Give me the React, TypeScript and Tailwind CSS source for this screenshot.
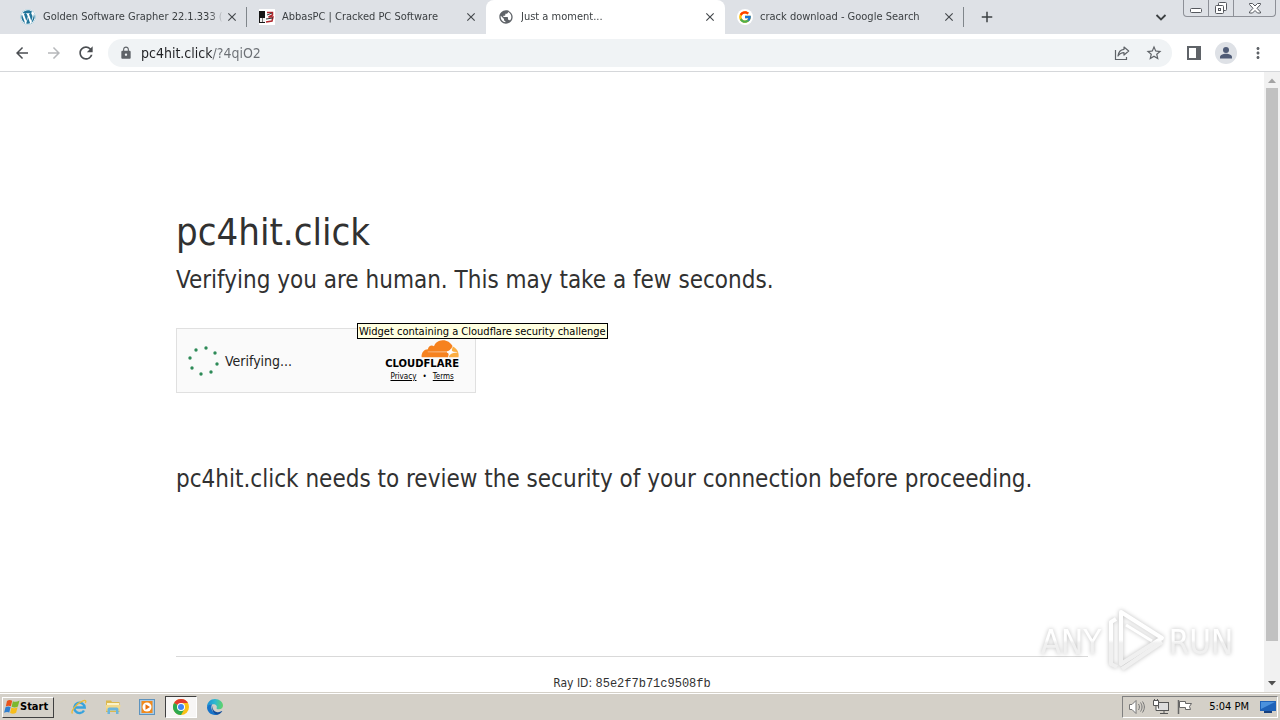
import type { ReactNode } from "react"
import { FaWordpress } from "react-icons/fa"
import { FcGoogle } from "react-icons/fc"
import { MdAdd, MdArrowBack, MdArrowForward, MdClose, MdLock, MdMoreVert, MdPublic, MdRefresh, MdStarBorder } from "react-icons/md"

interface Tab {
  id: string
  title: string
  icon: ReactNode
  active?: boolean
  divider?: boolean
}

const tabs: Tab[] = [
  {
    id: "grapher",
    title: "Golden Software Grapher 22.1.333 (",
    icon: <FaWordpress className="size-4 shrink-0 rounded-full bg-white text-[#21759b]" />,
    divider: true,
  },
  { id: "abbas", title: "AbbasPC | Cracked PC Software", icon: <AbbasIcon /> },
  {
    id: "moment",
    title: "Just a moment...",
    icon: <MdPublic className="size-4 shrink-0 text-[#5f6368]" />,
    active: true,
  },
  {
    id: "google",
    title: "crack download - Google Search",
    icon: (
      <span className="flex size-4 shrink-0 items-center justify-center rounded-full bg-white">
        <FcGoogle className="size-3.5" />
      </span>
    ),
    divider: true,
  },
]

function AbbasIcon() {
  return (
    <svg viewBox="0 0 16 16" className="size-4 shrink-0">
      <rect width="16" height="16" fill="#fff" />
      <rect y="2" width="6" height="12" fill="#161616" />
      <path d="M1 9h5v4H1z" fill="#eee" />
      <path d="M3.500 9v4" stroke="#777" />
      <path d="M8 3.500h5.500v2.500l-4 2h4.500l-1 4-6 1" fill="none" stroke="#b0272d" strokeWidth="1.500" />
      <path d="M8 6l5-2M7 10l7-1" stroke="#333" strokeWidth="1" />
    </svg>
  )
}

function ShareIcon() {
  return (
    <svg viewBox="0 0 16 16" className="size-4" fill="none" stroke="currentColor" strokeWidth="1.2">
      <path d="M1.500 5v9.500h11V12" />
      <path d="M10 2l4.700 4-4.700 4V7.700C7.400 7.700 5.600 8.600 4 11c.4-3.500 2.500-6.400 6-6.700z" strokeLinejoin="round" />
    </svg>
  )
}

function CloudIcon() {
  return (
    <svg viewBox="0 0 38 18" className="h-[18px] w-[38px]">
      <path d="M27 17.200l.5-2c.4-1.300-.2-2.300-1.700-2.500L7 12.300c-.4-.2-.3-.6.1-.7l19-.3c2.200-.2 4.300-2 5-4.200l.4-1C29.500 2.200 25.700 0 21.500.2c-4 .1-7.200 2.500-8.500 6C10.700 4.500 7.300 5.800 6.900 9.200c-3.700 0-6.600 3.300-6.300 7.700 0 .2.200.3.400.3z" fill="#f6821f" />
      <path d="M6 11.500l20-.1v1.300L7 12.600z" fill="#f6821f" />
      <path d="M31.800 6.500l-.8 2.700c-.4 1.400.2 2.300 1.700 2.500l3.400.3c.3.100.2.500-.1.600l-3.500.3c-2.200.2-4 1.800-4.500 3.700-.1.400 0 .6.300.6h9.200c.7-4.300-1-8.500-5.700-10.700z" fill="#fbad41" />
      <path d="M29.500 8.500l.6 2.400 2.400.6-2.400.6-.6 2.400-.6-2.400-2.400-.6 2.400-.6z" fill="#fff" opacity=".8" />
    </svg>
  )
}

function Spinner() {
  const dots = [
    [18, 3],
    [27, 8],
    [29, 19],
    [23, 27],
    [13, 29],
    [4, 23],
    [2, 13],
    [8, 5],
  ]
  return (
    <svg viewBox="0 0 32 32" className="size-8 shrink-0" fill="#2d8a57">
      {dots.map(([x, y]) => (
        <circle key={`${x}-${y}`} cx={x} cy={y} r="1.700" />
      ))}
    </svg>
  )
}

function WindowsFlag() {
  return (
    <svg viewBox="0 0 16 16" className="size-4">
      <path d="M3 2C5 .5 6.500 1 8.200 1.800L6.900 7.300C5 6.400 3.500 6.600 1.800 7.500z" fill="#e8541c" />
      <path d="M8.900 2.200c1.900 1 4 .8 6.600-.6l-1.600 5.800c-2.200 1.300-4.100 1.300-6.300.3z" fill="#7cb82f" />
      <path d="M1.500 8.300c1.800-1 3.300-1 5.100-.2l-1.300 5.400C3.700 12.700 2 12.800.1 13.800z" fill="#2f7fd0" />
      <path d="M7.400 8.500c2.200 1 3.900.8 6.200-.3l-1.500 5.600c-2.100 1.200-3.900 1.200-6 .3z" fill="#f7bd1b" />
    </svg>
  )
}

function ExplorerIcon() {
  return (
    <svg viewBox="0 0 16 16" className="size-4" fill="none">
      <path d="M13 11.500A5.200 5.200 0 1 1 13.700 8.500H4" stroke="#38a3dd" strokeWidth="2.400" />
      <path d="M1.500 14.500C-1 12 7 3.500 12 1.800c3-1 3.300.5 2.300 2.200" stroke="#eebb35" strokeWidth="1.300" />
    </svg>
  )
}

function FolderIcon() {
  return (
    <svg viewBox="0 0 16 16" className="size-4">
      <path d="M1 1.500h5L7 3h7.500v10H1z" fill="#dcb84e" />
      <path d="M2 4h12v7H2z" fill="#fbf3c8" />
      <path d="M.5 6h15L14.500 12h-13z" fill="#f3d98a" />
      <path d="M2.500 15v-4.500C2.500 9 3.500 8.500 5 8.500h6c1.500 0 2.500.5 2.500 2V15H11v-3.500H5V15z" fill="#6bb5dc" />
    </svg>
  )
}

function PlayerIcon() {
  return (
    <svg viewBox="0 0 16 16" className="size-4">
      <rect x=".5" y=".5" width="15" height="15" fill="#a9cbe6" stroke="#5d93be" />
      <rect x="2.500" y="2" width="11" height="12" fill="#f08a1d" />
      <circle cx="8" cy="8" r="4.500" fill="#fff" />
      <path d="M6.500 5.300L11 8l-4.500 2.700z" fill="#e8700f" />
    </svg>
  )
}

function ChromeIcon() {
  return (
    <svg viewBox="0 0 16 16" className="size-4">
      <circle cx="8" cy="8" r="8" fill="#fbc116" />
      <path d="M8 8L1.070 4A8 8 0 0 1 14.930 4H8z" fill="#e33b2e" />
      <path d="M8 8L1.070 4A8 8 0 0 0 8 16l3.460-6z" fill="#2da94f" />
      <path d="M8 4h6.930L11.460 10z" fill="#fbc116" />
      <circle cx="8" cy="8" r="4" fill="#fff" />
      <circle cx="8" cy="8" r="3" fill="#4285f4" />
    </svg>
  )
}

function EdgeIcon() {
  return (
    <svg viewBox="0 0 16 16" className="size-4">
      <defs>
        <linearGradient id="edge-wave" x1="0" y1="0.3" x2="1" y2="0.4">
          <stop offset="0" stopColor="#1a8fd6" />
          <stop offset="0.5" stopColor="#2fb8d0" />
          <stop offset="1" stopColor="#5fd36a" />
        </linearGradient>
      </defs>
      <path d="M0 8C0 3.500 3.500 0 8 0s8 3 8 6.500c0 2.300-1.600 3.700-4 3.700-1.800 0-2.700-.6-2.400-1.300C10.500 7 9 5.200 6.500 5.200 3 5.200.2 7 0 8z" fill="url(#edge-wave)" />
      <path d="M0 8c.3-1.700 2.700-3 5.500-2.800C3.500 7 4 12 7.500 14c1 .8 2.500 1.300 3.500 1.400C5.500 17.500 0 13.500 0 8z" fill="#1673c9" />
      <path d="M6.700 6.200C5 8 5.700 12 9.500 13c2 .5 3.800 0 5.500-1 .3 0 .3.300.1.600-1 1.600-2.700 2.800-4.600 3.100C6 15 3.500 9.500 6.700 6.200z" fill="#124e9c" />
    </svg>
  )
}

const launchers = [
  { name: "Internet Explorer", icon: <ExplorerIcon /> },
  { name: "Windows Explorer", icon: <FolderIcon /> },
  { name: "Media Player", icon: <PlayerIcon /> },
  { name: "Google Chrome", icon: <ChromeIcon />, active: true },
  { name: "Microsoft Edge", icon: <EdgeIcon /> },
]

function TabStrip() {
  return (
    <div className="flex h-[34px] shrink-0 bg-[#dee1e6] pl-2">
      {tabs.map((tab) => (
        <div
          key={tab.id}
          className={`relative flex w-[239px] items-center pr-[7px] pl-3 ${tab.active ? "rounded-t-lg bg-white" : ""}`}
        >
          {tab.icon}
          <span className="ml-[7px] min-w-0 flex-1 overflow-hidden mask-r-from-92% text-[11px] whitespace-nowrap text-[#3c4043]">
            {tab.title}
          </span>
          <button aria-label={`Close ${tab.title}`} className="flex size-4 items-center justify-center text-[#45494d]">
            <MdClose className="size-3.5 stroke-current" />
          </button>
          {tab.divider && <span className="absolute right-0 h-5 w-px bg-[#80868b]" />}
        </div>
      ))}
      <button aria-label="New tab" className="ml-[14px] text-[#3c4043]">
        <MdAdd className="size-[18px] stroke-current" />
      </button>
      <button aria-label="Search tabs" className="mr-[16px] ml-auto text-[#3c4043]">
        <svg viewBox="0 0 12 12" className="size-3" fill="none" stroke="currentColor" strokeWidth="1.800">
          <path d="M1.500 4L6 8.500 10.500 4" />
        </svg>
      </button>
      <div className="mr-1 flex h-[17px] divide-x divide-[#8d9097] rounded-b-sm border border-t-0 border-[#8d9097] text-[#55585e]">
        <button aria-label="Minimize" className="flex w-[25px] items-center justify-center">
          <svg viewBox="0 0 14 14" className="size-3.5" fill="#fff" stroke="currentColor">
            <rect x="1.500" y="7.500" width="11" height="4" rx="1" />
          </svg>
        </button>
        <button aria-label="Restore" className="flex w-[25px] items-center justify-center">
          <svg viewBox="0 0 14 14" className="size-3.5" fill="#fff" stroke="currentColor">
            <rect x="4.500" y="1.500" width="8" height="8" rx="1" />
            <rect x="1.500" y="4.500" width="8" height="8" rx="1" />
            <rect x="4.500" y="7.500" width="2" height="2" />
          </svg>
        </button>
        <button aria-label="Close" className="flex w-[41px] items-center justify-center">
          <svg viewBox="0 0 14 14" className="size-3.5" fill="#fff" stroke="currentColor">
            <path d="M1.500 2.500h3L7 5l2.500-2.500h3v1L9 7.300l3.500 3.700v1h-3L7 9.500 4.500 12h-3v-1L5 7.300 1.500 3.500z" />
          </svg>
        </button>
      </div>
    </div>
  )
}

function ToolButton({ label, children }: { label: string; children: ReactNode }) {
  return (
    <button aria-label={label} className="flex size-7 shrink-0 items-center justify-center text-[#5f6368]">
      {children}
    </button>
  )
}

function Toolbar() {
  return (
    <div className="flex h-[38px] shrink-0 items-center gap-1 border-b border-[#d5d7da] bg-white px-2">
      <ToolButton label="Back">
        <MdArrowBack className="size-[18px] text-[#4b4e52]" />
      </ToolButton>
      <ToolButton label="Forward">
        <MdArrowForward className="size-[18px] text-[#b6b8bb]" />
      </ToolButton>
      <ToolButton label="Reload">
        <MdRefresh className="size-5 text-[#4b4e52]" />
      </ToolButton>
      <div className="mx-1 flex h-7 flex-1 items-center rounded-full bg-[#f0f3f5] pr-1 pl-[11px]">
        <MdLock className="size-3.5 text-[#5f6368]" />
        <input
          aria-label="Address"
          readOnly
          value="pc4hit.click/?4qiO2"
          className="ml-2 min-w-0 flex-1 bg-[linear-gradient(90deg,#202124_71px,#6b6f74_71px)] bg-clip-text text-sm text-transparent outline-none"
        />
        <div className="flex gap-1">
          <ToolButton label="Share">
            <ShareIcon />
          </ToolButton>
          <ToolButton label="Bookmark">
            <MdStarBorder className="size-[18px]" />
          </ToolButton>
        </div>
      </div>
      <div className="flex gap-1">
        <ToolButton label="Side panel">
          <svg viewBox="0 0 14 14" className="size-3.5">
            <path d="M1 1h12v12H1z" fill="none" stroke="currentColor" strokeWidth="2" />
            <path d="M9 1h4v12H9z" fill="currentColor" />
          </svg>
        </ToolButton>
        <ToolButton label="Profile">
          <svg viewBox="0 0 22 22" className="size-[22px]">
            <circle cx="11" cy="11" r="11" fill="#dee1e6" />
            <circle cx="11" cy="8" r="3" fill="#4f5b76" />
            <path d="M5 16.500v-1.300c0-2.200 3-3.400 6-3.400s6 1.200 6 3.400v1.300z" fill="#4f5b76" />
          </svg>
        </ToolButton>
        <ToolButton label="Menu">
          <MdMoreVert className="size-[18px]" />
        </ToolButton>
      </div>
    </div>
  )
}

function ChallengeWidget() {
  return (
    <div className="relative mt-[30px] flex h-[65px] w-[300px] items-center border border-[#e0e0e0] bg-[#fafafa] pr-4 pl-[11px]">
      <Spinner />
      <span className="ml-[5px] text-sm text-[#232323]">Verifying...</span>
      <div className="ml-auto flex flex-col items-end text-black">
        <CloudIcon />
        <span className="mt-px font-['DejaVu_Sans'] text-[10px] leading-[10px] font-bold">CLOUDFLARE</span>
        <div className="mt-[3px] flex w-full justify-center gap-1.5 text-[8px] leading-[10px]">
          <a href="#privacy" className="underline">
            Privacy
          </a>
          <span>•</span>
          <a href="#terms" className="underline">
            Terms
          </a>
        </div>
      </div>
      <div
        role="tooltip"
        className="absolute -top-[6px] left-[180px] border border-black bg-[#ffffe1] px-px pt-px text-[11px] leading-[13px] whitespace-nowrap text-black"
      >
        Widget containing a Cloudflare security challenge
      </div>
    </div>
  )
}

function Watermark() {
  return (
    <svg viewBox="0 0 200 70" className="absolute right-[42px] bottom-[16px] h-[70px] w-[200px] drop-shadow-[0_0_2px_rgba(0,0,0,0.25)]">
      <defs>
        <linearGradient id="mark" gradientUnits="userSpaceOnUse" x1="0" y1="34" x2="0" y2="37">
          <stop offset="0" stopColor="#fff" />
          <stop offset="1" stopColor="#f0f0f0" />
        </linearGradient>
      </defs>
      <g fill="url(#mark)" fontFamily="'DejaVu Sans Condensed', 'DejaVu Sans'" fontSize="33">
        <text x="33" y="48" textAnchor="middle">
          ANY
        </text>
        <text x="163" y="48" textAnchor="middle">
          RUN
        </text>
      </g>
      <g fill="none" stroke="url(#mark)" strokeWidth="4" strokeLinejoin="round">
        <path d="M83 6l41 26-41 26z" />
        <path d="M78 13l-5 3v42l6 3M124 36L84 63" />
        <path d="M88 19l26 16" strokeWidth="3" />
      </g>
    </svg>
  )
}

function Scrollbar() {
  return (
    <div className="flex w-4 shrink-0 flex-col items-center bg-[#f1f1f1]">
      <svg viewBox="0 0 16 16" className="size-4 shrink-0">
        <path d="M4 11h8L8 6.500z" fill="#a3a3a3" />
      </svg>
      <div className="w-full flex-1 px-0.5">
        <div className="h-[94%] bg-[#c1c1c1]" />
      </div>
      <svg viewBox="0 0 16 16" className="size-4 shrink-0">
        <path d="M4 5h8L8 9.500z" fill="#505050" />
      </svg>
    </div>
  )
}

function Taskbar() {
  return (
    <div className="flex h-7 shrink-0 items-center border-t border-[#d4d0c8] bg-[#d4d0c8] px-0.5 text-[11px] text-black shadow-[inset_0_1px_0_#fff]">
      <button className="mt-px flex h-[21px] w-[52px] items-center border border-t-white border-r-[#404040] border-b-[#404040] border-l-white pl-px font-bold">
        <WindowsFlag />
        Start
      </button>
      <div className="mt-px ml-[9px] flex gap-0.5">
        {launchers.map((app) => (
          <button
            key={app.name}
            aria-label={app.name}
            className={`flex h-[22px] w-8 items-center justify-center border ${
              app.active ? "border-t-[#404040] border-r-white border-b-white border-l-[#404040] bg-[#f7f6f5]" : "border-transparent"
            }`}
          >
            {app.icon}
          </button>
        ))}
      </div>
      <div className="mt-px ml-auto flex h-[22px] items-center border border-t-[#808080] border-r-white border-b-white border-l-[#808080] pr-px pl-1.5">
        <svg viewBox="0 0 16 16" className="size-4" fill="#fff" stroke="#777">
          <path d="M.5 5.500h2.500l4-4v13l-4-4H.5z" />
          <path d="M9.500 5c1.200 2 1.200 4 0 6M11.500 3.500c2 3 2 6 0 9M13.500 2.500c2.500 4 2.500 7 0 11" fill="none" />
        </svg>
        <svg viewBox="0 0 16 16" className="ml-2 size-4" fill="#fff" stroke="#555">
          <rect x="5.500" y="3.500" width="10" height="8" fill="#ddd" />
          <path d="M7 14.500h8M11 11.500v3" />
          <path d="M.5 1.500h5v5h-5zM3 6.500v5h4M1.500 0v2M4.500 0v2" />
        </svg>
        <svg viewBox="0 0 16 16" className="ml-2 size-4" fill="#fff" stroke="#666">
          <path d="M1.500 1v14" strokeWidth="1.500" />
          <path d="M2.500 2.500h6v2h6l-2 3 1 3h-5v-2h-6z" />
        </svg>
        <span className="ml-4">5:04 PM</span>
        <svg viewBox="0 0 16 16" className="ml-[11px] size-4">
          <path d="M0 2h16v10H0z" fill="#1f62b8" />
          <path d="M1 3h14L1 10z" fill="#4b91dd" />
          <path d="M4 12h8v2H4z" fill="#173f7c" />
        </svg>
      </div>
    </div>
  )
}

export default function App() {
  return (
    <div className="flex h-screen flex-col overflow-hidden bg-white font-['DejaVu_Sans_Condensed','DejaVu_Sans',sans-serif]">
      <TabStrip />
      <Toolbar />
      <div className="relative flex min-h-0 flex-1">
        <main className="flex min-w-0 flex-1 flex-col text-[#313131]">
          <div className="mx-auto flex w-full max-w-[960px] flex-1 flex-col px-6 pt-[130px]">
            <h1 className="text-[38px] leading-[60px]">pc4hit.click</h1>
            <h2 className="text-2xl leading-9">Verifying you are human. This may take a few seconds.</h2>
            <ChallengeWidget />
            <p className="mt-[68px] text-2xl leading-9">
              pc4hit.click needs to review the security of your connection before proceeding.
            </p>
            <footer className="mt-auto h-9 border-t border-[#d9d9d9] pt-[17px] text-center text-xs leading-[18px]">
              Ray ID: <code className="font-['Liberation_Mono',monospace]">85e2f7b71c9508fb</code>
            </footer>
          </div>
        </main>
        <Scrollbar />
        <Watermark />
      </div>
      <Taskbar />
    </div>
  )
}
